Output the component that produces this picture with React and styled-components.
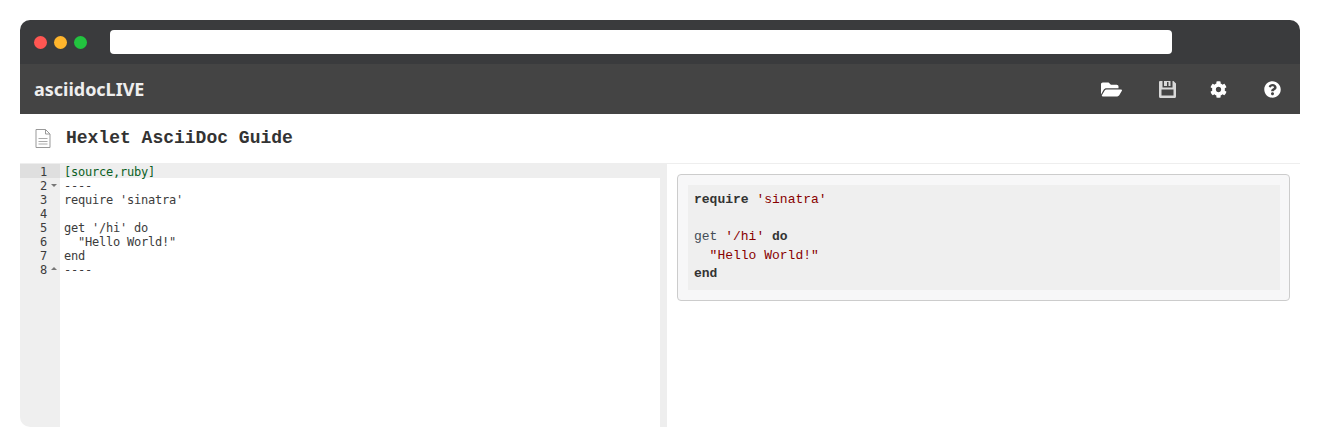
import React from 'react';
import styled, { createGlobalStyle } from 'styled-components';
import { FaFolderOpen, FaCog, FaQuestionCircle } from 'react-icons/fa';

const Global = createGlobalStyle`
  html, body { margin: 0; padding: 0; background: #fff; }
  body { font-family: "Liberation Sans", sans-serif; }
`;
const Page = styled.div`padding: 20px 20px 20px;`;
const Browser = styled.div`
  height: 407px; border-radius: 10px; overflow: hidden;
  display: flex; flex-direction: column; background: #fff;
`;
const Chrome = styled.div`
  height: 44px; background: #3a3b3d; display: flex; align-items: center;
  padding: 0 128px 0 14px; flex: none;
`;
const Dots = styled.div`display: flex; gap: 7px; margin-right: 23px;`;
const Dot = styled.span`width: 13px; height: 13px; border-radius: 50%; background: ${p => p.$c};`;
const Address = styled.div`flex: 1; height: 24px; background: #fff; border-radius: 4px;`;
const Nav = styled.div`
  height: 50px; background: #444; display: flex; align-items: center;
  padding: 0 17px 0 14px; flex: none; color: #fff;
`;
const Brand = styled.div`
  font-family: "Noto Sans", sans-serif; font-weight: 700; font-size: 18px;
  letter-spacing: -0.02px; color: #eee; flex: 1;
`;
const NavIcon = styled.span`
  display: flex; justify-content: center; width: 22px; margin-left: ${p => p.$ml}px; color: #fff;
`;
const Floppy = styled.svg`width: 17px; height: 17px; display: block;`;
const TitleBar = styled.div`
  height: 49px; border-bottom: 1px solid #eee; display: flex; align-items: center;
  padding-left: 15px; flex: none;
`;
const DocIcon = styled.svg`width: 16px; height: 19px; margin-right: 15px; flex: none;`;
const Title = styled.h1`
  margin: 0 0 2px; font: 700 18px "Liberation Mono", monospace; color: #333;
`;
const Split = styled.div`flex: 1; display: flex; min-height: 0;`;
const Editor = styled.div`width: 640px; display: flex; flex: none;`;
const Gutter = styled.div`width: 40px; background: #efefef; flex: none;`;
const GutterRow = styled.div`
  height: 14px; font: 12px/16px "DejaVu Sans Mono", monospace;
  letter-spacing: -0.22px; color: #3c3c3c; display: flex; justify-content: flex-end;
  padding-right: 13px; position: relative; background: ${p => p.$active ? '#dfdfdf' : 'transparent'};
`;
const Fold = styled.span`
  position: absolute; left: 31px; top: ${p => p.$up ? 5 : 6}px; width: 0; height: 0;
  border-left: 3px solid transparent; border-right: 3px solid transparent;
  ${p => p.$up ? 'border-bottom: 3px solid #777;' : 'border-top: 3px solid #777;'}
`;
const Code = styled.div`flex: 1; min-width: 0;`;
const CodeRow = styled.div`
  height: 14px; font: 12px/16px "DejaVu Sans Mono", monospace; letter-spacing: -0.22px;
  padding-left: 4px; white-space: pre; color: ${p => p.$c || '#3c3c3c'};
  background: ${p => p.$active ? '#eeeeee' : 'transparent'};
`;
const Divider = styled.div`width: 7px; background: #eee; flex: none;`;
const Preview = styled.div`flex: 1; padding: 10px; min-width: 0;`;
const Listing = styled.div`
  background: #f7f7f8; border: 1px solid #ccc; border-radius: 4px; padding: 10px 9px 10px 10px;
`;
const Pre = styled.pre`
  margin: 0; background: #efefef; padding: 6px 6px 0; height: 105px; box-sizing: border-box;
  font: 13px/18.5px "Liberation Mono", monospace; color: #444c56;
`;
const Kw = styled.b`color: #333;`;
const Str = styled.span`color: #880000;`;

const lines = ['[source,ruby]', '----', "require 'sinatra'", '', "get '/hi' do", '  "Hello World!"', 'end', '----'];

export default function App() {
  return (
    <Page>
      <Global />
      <Browser>
        <Chrome>
          <Dots>
            <Dot $c="#ff5652" />
            <Dot $c="#ffb52c" />
            <Dot $c="#22c33f" />
          </Dots>
          <Address />
        </Chrome>
        <Nav>
          <Brand>asciidocLIVE</Brand>
          <NavIcon><FaFolderOpen size={21} /></NavIcon>
          <NavIcon $ml={34}>
            <Floppy viewBox="0 0 17 17">
              <path
                fill="#d8d8d8"
                fillRule="evenodd"
                d="M1 0h2.500v6.500h10V0h1l2.500 2.500V15.500a1.500 1.500 0 0 1-1.500 1.500h-14A1.500 1.500 0 0 1 0 15.500V1a1 1 0 0 1 1-1zM2.500 8.500v6h12v-6zM5 0h6.500v5H9.500V1H8v4H5z"
              />
            </Floppy>
          </NavIcon>
          <NavIcon $ml={29}><FaCog size={17} /></NavIcon>
          <NavIcon $ml={32}><FaQuestionCircle size={17} /></NavIcon>
        </Nav>
        <TitleBar>
          <DocIcon viewBox="0 0 16 19" fill="none" stroke="#999">
            <path d="M1 .5h9.500l4.500 4.500v13.500H1z" fill="#fff" strokeWidth="1" />
            <path d="M10.500.5V5H15" strokeWidth="1" />
            <path d="M3.500 9.500h9M3.500 12.500h9M3.500 15h9" strokeWidth="1" stroke="#aaa" />
          </DocIcon>
          <Title>Hexlet AsciiDoc Guide</Title>
        </TitleBar>
        <Split>
          <Editor>
            <Gutter>
              {lines.map((_, i) => (
                <GutterRow key={i} $active={i === 0}>
                  {i + 1}
                  {i === 1 && <Fold />}
                  {i === 7 && <Fold $up />}
                </GutterRow>
              ))}
            </Gutter>
            <Code>
              {lines.map((l, i) => (
                <CodeRow key={i} $active={i === 0} $c={i === 0 ? '#0b6125' : undefined}>{l}</CodeRow>
              ))}
            </Code>
          </Editor>
          <Divider />
          <Preview>
            <Listing>
              <Pre>
                <Kw>require</Kw> <Str>'sinatra'</Str>{'\n\n'}get <Str>'/hi'</Str> <Kw>do</Kw>{'\n  '}<Str>"Hello World!"</Str>{'\n'}<Kw>end</Kw>
              </Pre>
            </Listing>
          </Preview>
        </Split>
      </Browser>
    </Page>
  );
}
